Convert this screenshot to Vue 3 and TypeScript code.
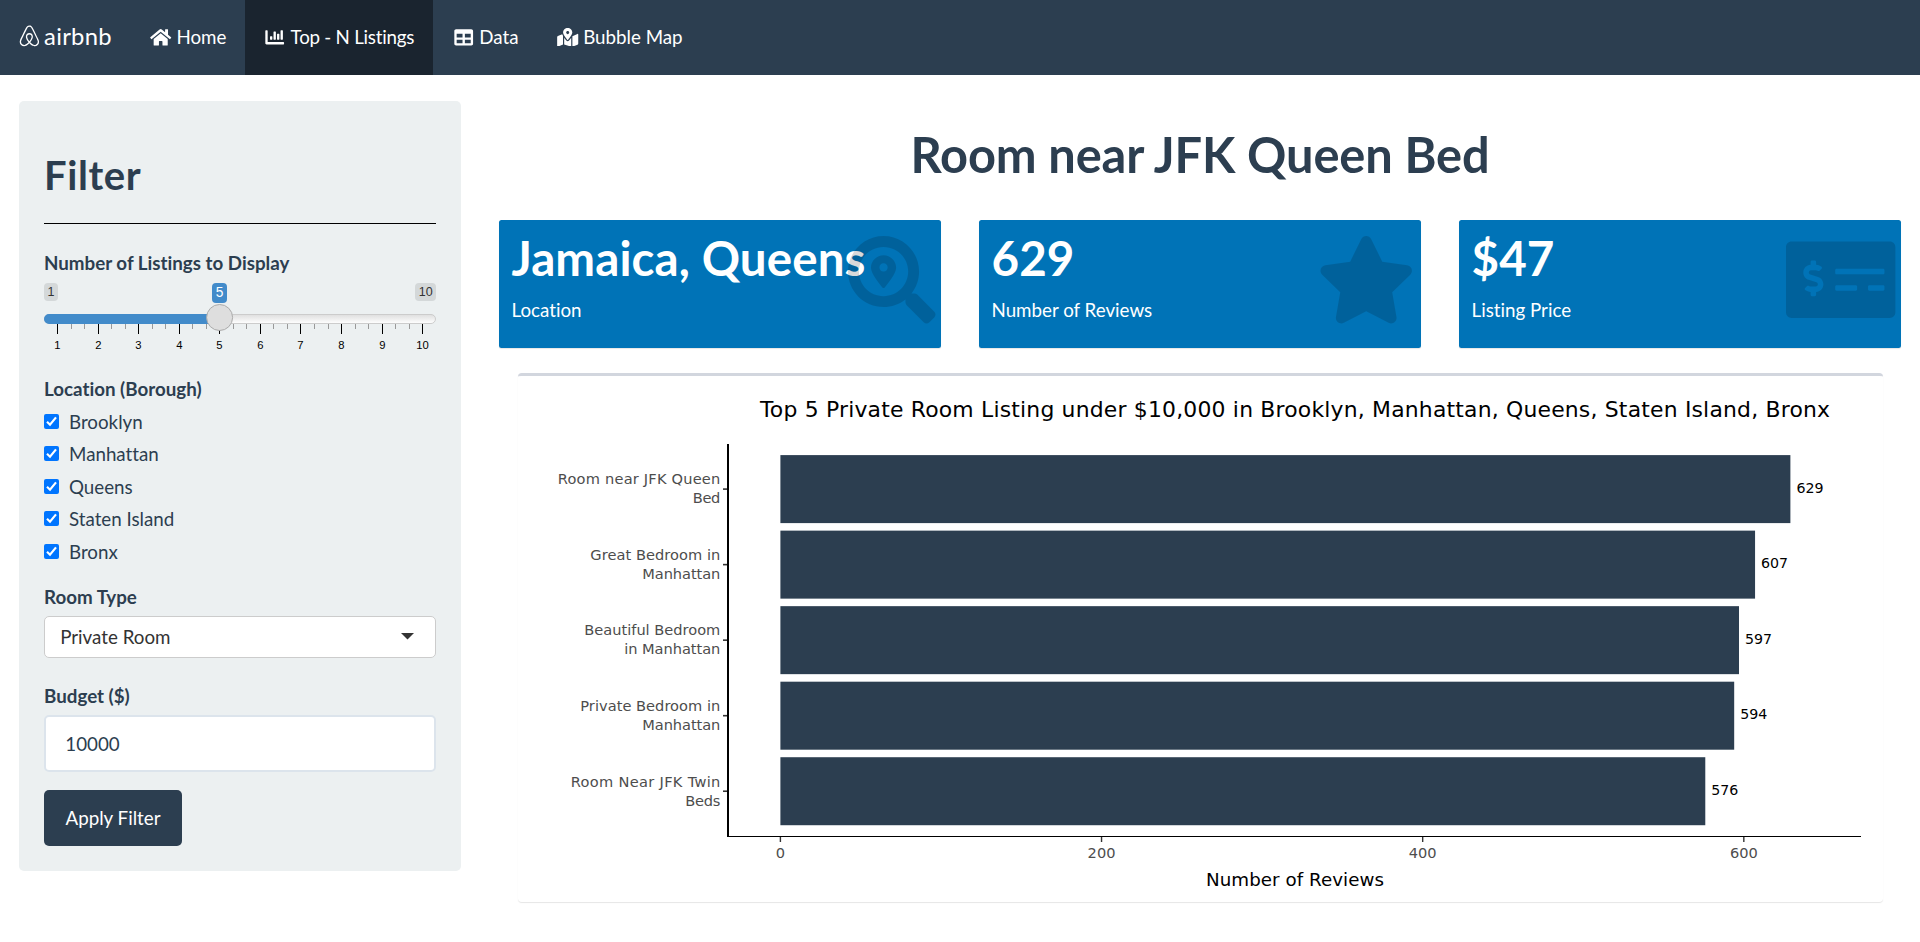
<script setup lang="ts">
interface NavItem {
  label: string
  width: number
  path: string
  active?: boolean
}

interface Listing {
  lines: { text: string; width: number }[]
  reviews: number
}

interface Stat {
  value: string
  label: string
  width: number
  path: string
}

const airbnbPath =
  'M224 373.12c-25.24-31.67-40.08-59.43-45-83.18-22.55-88 112.61-88 90.06 0-5.45 24.25-20.29 52-45 83.18zm138.15 73.23c-42.06 18.31-83.67-10.88-119.3-50.47 103.9-130.07 46.11-200-18.85-200-54.92 0-85.16 46.51-73.28 100.5 6.93 29.19 25.23 62.39 54.43 99.5-32.53 36.05-60.55 52.69-85.15 54.92-50 7.43-89.11-41.06-71.3-91.09 15.1-39.16 111.72-231.18 115.87-241.56 15.75-30.07 25.56-57.4 59.38-57.4 32.34 0 43.4 25.94 60.37 59.87 36 70.62 89.35 177.48 114.84 239.09 13.17 33.07-1.37 71.29-37.01 86.64zm47-136.12C280.27 35.93 273.13 32 224 32c-45.52 0-64.87 31.67-84.66 72.79C33.18 317.1 22.89 347.19 22 349.81-3.22 419.14 48.74 480 111.63 480c21.71 0 60.61-6.06 112.37-62.4 58.68 63.78 101.26 62.4 112.37 62.4 62.89.05 114.85-60.86 89.61-130.19.02-3.89-16.82-38.9-16.82-39.58z'

const navItems: NavItem[] = [
  {
    label: 'Home',
    width: 576,
    path: 'M280.37 148.26L96 300.11V464a16 16 0 0 0 16 16l112.06-.29a16 16 0 0 0 15.92-16V368a16 16 0 0 1 16-16h64a16 16 0 0 1 16 16v95.64a16 16 0 0 0 16 16.05L464 480a16 16 0 0 0 16-16V300L295.67 148.26a12.19 12.19 0 0 0-15.3 0zM571.6 251.47L488 182.56V44.05a12 12 0 0 0-12-12h-56a12 12 0 0 0-12 12v72.61L318.47 43a48 48 0 0 0-61 0L4.34 251.47a12 12 0 0 0-1.6 16.9l25.5 31A12 12 0 0 0 45.15 301l235.22-193.74a12.19 12.19 0 0 1 15.3 0L530.9 301a12 12 0 0 0 16.9-1.6l25.5-31a12 12 0 0 0-1.7-16.93z',
  },
  {
    label: 'Top - N Listings',
    width: 512,
    active: true,
    path: 'M332.8 320h38.4c6.4 0 12.8-6.4 12.8-12.8V172.8c0-6.4-6.4-12.8-12.8-12.8h-38.4c-6.4 0-12.8 6.4-12.8 12.8v134.4c0 6.4 6.4 12.8 12.8 12.8zm96 0h38.4c6.4 0 12.8-6.4 12.8-12.8V76.8c0-6.4-6.4-12.8-12.8-12.8h-38.4c-6.4 0-12.8 6.4-12.8 12.8v230.4c0 6.4 6.4 12.8 12.8 12.8zm-288 0h38.4c6.4 0 12.8-6.4 12.8-12.8v-70.4c0-6.4-6.4-12.8-12.8-12.8h-38.4c-6.4 0-12.8 6.4-12.8 12.8v70.4c0 6.4 6.4 12.8 12.8 12.8zm96 0h38.4c6.4 0 12.8-6.4 12.8-12.8V108.8c0-6.4-6.4-12.8-12.8-12.8h-38.4c-6.4 0-12.8 6.4-12.8 12.8v198.4c0 6.4 6.4 12.8 12.8 12.8zM496 384H64V80c0-8.84-7.16-16-16-16H16C7.16 64 0 71.16 0 80v336c0 17.67 14.33 32 32 32h464c8.84 0 16-7.16 16-16v-32c0-8.84-7.16-16-16-16z',
  },
  {
    label: 'Data',
    width: 512,
    path: 'M464 32H48C21.49 32 0 53.49 0 80v352c0 26.51 21.49 48 48 48h416c26.51 0 48-21.49 48-48V80c0-26.51-21.49-48-48-48zM224 416H64v-96h160v96zm0-160H64v-96h160v96zm224 160H288v-96h160v96zm0-160H288v-96h160v96z',
  },
  {
    label: 'Bubble Map',
    width: 576,
    path: 'M288 0c-69.59 0-126 56.41-126 126 0 56.26 82.35 158.8 113.9 196.02 6.39 7.54 17.82 7.54 24.2 0C331.65 284.8 414 182.26 414 126 414 56.41 357.59 0 288 0zm0 168c-23.2 0-42-18.8-42-42s18.8-42 42-42 42 18.8 42 42-18.8 42-42 42zM20.12 215.95A32.006 32.006 0 0 0 0 245.66v250.32c0 11.32 11.43 19.06 21.94 14.86L160 448V214.92c-8.84-15.98-16.07-31.54-21.25-46.42L20.12 215.95zM288 359.67c-14.07 0-27.38-6.18-36.51-16.96-19.66-23.2-40.57-49.62-59.49-76.72v182l192 64V266c-18.92 27.09-39.82 53.52-59.49 76.72-9.13 10.77-22.44 16.95-36.51 16.95zm266.06-198.51L416 224v288l139.88-55.95A31.996 31.996 0 0 0 576 426.34V176.02c0-11.32-11.43-19.06-21.94-14.86z',
  },
]

const stats: Stat[] = [
  {
    value: 'Jamaica, Queens',
    label: 'Location',
    width: 512,
    path: 'M505.04 442.66l-99.71-99.69c-4.5-4.5-10.6-7-17-7h-16.3c27.6-35.3 44-79.69 44-127.99C416.03 93.09 322.92 0 208.02 0S0 93.09 0 207.98s93.11 207.98 208.02 207.98c48.3 0 92.71-16.4 128.01-44v16.3c0 6.4 2.5 12.5 7 17l99.71 99.69c9.4 9.4 24.6 9.4 33.9 0l28.3-28.3c9.4-9.4 9.4-24.59.1-33.99zm-297.02-90.7c-79.54 0-144-64.34-144-143.98 0-79.53 64.35-143.98 144-143.98 79.54 0 144 64.34 144 143.98 0 79.53-64.35 143.98-144 143.98zm.02-239.96c-40.78 0-73.84 33.05-73.84 73.83 0 32.96 48.26 93.05 66.75 114.86a9.24 9.24 0 0 0 14.18 0c18.49-21.81 66.75-81.89 66.75-114.86 0-40.78-33.06-73.83-73.84-73.83zm0 96c-13.26 0-24-10.75-24-24 0-13.26 10.75-24 24-24s24 10.75 24 24c0 13.25-10.75 24-24 24z',
  },
  {
    value: '629',
    label: 'Number of Reviews',
    width: 576,
    path: 'M259.3 17.8L194 150.2 47.9 171.5c-26.2 3.8-36.7 36.1-17.7 54.6l105.7 103-25 145.5c-4.5 26.3 23.2 46 46.4 33.7L288 439.6l130.7 68.7c23.2 12.2 50.9-7.4 46.4-33.7l-25-145.5 105.7-103c19-18.5 8.5-50.8-17.7-54.6L382 150.2 316.7 17.8c-11.7-23.6-45.6-23.9-57.4 0z',
  },
  {
    value: '$47',
    label: 'Listing Price',
    width: 640,
    path: 'M608 32H32C14.33 32 0 46.33 0 64v384c0 17.67 14.33 32 32 32h576c17.67 0 32-14.33 32-32V64c0-17.67-14.33-32-32-32zM176 327.88V344c0 4.42-3.58 8-8 8h-16c-4.42 0-8-3.58-8-8v-16.29c-11.29-.58-22.27-4.52-31.37-11.35-3.9-2.93-4.1-8.77-.57-12.14l11.75-11.21c2.77-2.64 6.89-2.76 10.13-.73 3.87 2.42 8.26 3.72 12.82 3.72h28.11c6.5 0 11.8-5.92 11.8-13.19 0-5.95-3.61-11.19-8.77-12.73l-45-13.5c-18.59-5.58-31.58-23.42-31.58-43.39 0-24.52 19.05-44.44 42.67-45.07V152c0-4.42 3.58-8 8-8h16c4.42 0 8 3.58 8 8v16.29c11.29.58 22.27 4.51 31.37 11.35 3.9 2.93 4.1 8.77.57 12.14l-11.75 11.21c-2.77 2.64-6.89 2.76-10.13.73-3.87-2.43-8.26-3.72-12.82-3.72h-28.11c-6.5 0-11.8 5.92-11.8 13.19 0 5.95 3.61 11.19 8.77 12.73l45 13.5c18.59 5.58 31.58 23.42 31.58 43.39 0 24.53-19.05 44.44-42.67 45.07zM416 312c0 4.42-3.58 8-8 8H296c-4.42 0-8-3.58-8-8v-16c0-4.42 3.58-8 8-8h112c4.42 0 8 3.58 8 8v16zm160 0c0 4.42-3.58 8-8 8h-80c-4.42 0-8-3.58-8-8v-16c0-4.42 3.58-8 8-8h80c4.42 0 8 3.58 8 8v16zm0-96c0 4.42-3.58 8-8 8H296c-4.42 0-8-3.58-8-8v-16c0-4.42 3.58-8 8-8h272c4.42 0 8 3.58 8 8v16z',
  },
]

const boroughs = ['Brooklyn', 'Manhattan', 'Queens', 'Staten Island', 'Bronx']

// Slider ticks: one major per value, two minors between neighbours
const tickStep = 40.56
const majors = Array.from({ length: 10 }, (_, i) => ({
  n: i + 1,
  x: Math.round(13.1 + i * tickStep),
}))
const minors = Array.from({ length: 9 }, (_, i) => [1, 2].map((k) => Math.round(13.1 + (i + k / 3) * tickStep))).flat()

// Chart geometry, in the coordinates of the plot's own svg
const zero = 262.4
const perReview = 1.6057
const listings: Listing[] = [
  { lines: [{ text: 'Room near JFK Queen', width: 162.5 }, { text: 'Bed', width: 27.5 }], reviews: 629 },
  { lines: [{ text: 'Great Bedroom in', width: 130 }, { text: 'Manhattan', width: 78 }], reviews: 607 },
  { lines: [{ text: 'Beautiful Bedroom', width: 136 }, { text: 'in Manhattan', width: 96 }], reviews: 597 },
  { lines: [{ text: 'Private Bedroom in', width: 140 }, { text: 'Manhattan', width: 78 }], reviews: 594 },
  { lines: [{ text: 'Room Near JFK Twin', width: 149.5 }, { text: 'Beds', width: 35 }], reviews: 576 },
]
const bars = listings.map((l, i) => {
  const top = 79.1 + i * 75.53
  return { ...l, top, width: l.reviews * perReview, mid: top + 34 }
})
const axisTicks = [0, 200, 400, 600].map((v) => ({ v, x: zero + v * perReview }))
</script>

<template>
  <div class="page">
    <nav class="navbar">
      <div class="brand">
        <svg class="brand-icon" viewBox="0 0 448 512"><path :d="airbnbPath" /></svg>
        <span>airbnb</span>
      </div>
      <div v-for="item in navItems" :key="item.label" class="nav-item" :class="{ active: item.active }">
        <svg class="nav-icon" :viewBox="`0 0 ${item.width} 512`"><path :d="item.path" /></svg>
        <span>{{ item.label }}</span>
      </div>
    </nav>

    <div class="content">
      <aside class="sidebar">
        <h2>Filter</h2>
        <hr />
        <div class="label">Number of Listings to Display</div>
        <svg class="slider" width="392" height="70" viewBox="0 0 392 70">
          <defs>
            <linearGradient id="track" x1="0" y1="0" x2="0" y2="1">
              <stop offset="0" stop-color="#dedede" />
              <stop offset="1" stop-color="#ffffff" />
            </linearGradient>
          </defs>
          <rect width="14" height="18" rx="4" fill="#d4d8d9" />
          <text x="7" y="13" class="range">1</text>
          <rect x="371" width="21" height="18" rx="4" fill="#d4d8d9" />
          <text x="381.7" y="13" class="range">10</text>
          <rect x="168" width="15" height="20" rx="4" fill="#428bca" />
          <text x="175.6" y="14" class="range current">5</text>
          <rect x=".5" y="31.5" width="391" height="9" rx="4.5" fill="url(#track)" stroke="#cccccc" />
          <path d="M5 31H176V41H5A5 5 0 0 1 5 31Z" fill="#428bca" />
          <rect v-for="x in minors" :key="`m${x}`" :x="x" y="41" width="1" height="5" fill="#999999" />
          <g v-for="m in majors" :key="m.n">
            <rect :x="m.x" y="41" width="1" height="10" fill="#000000" />
            <text :x="m.x + 0.5" y="66" class="tick">{{ m.n }}</text>
          </g>
          <circle cx="175.6" cy="34.5" r="13" fill="#dedede" stroke="#ababab" />
        </svg>

        <div class="label label-location">Location (Borough)</div>
        <div class="checks">
          <div v-for="b in boroughs" :key="b" class="check">
            <svg class="box" width="15" height="15" viewBox="0 0 15 15">
              <rect width="15" height="15" rx="2" fill="#0075ff" />
              <path d="M3 7.8L6 10.7L12 3.4" fill="none" stroke="#ffffff" stroke-width="2.2" />
            </svg>
            <span>{{ b }}</span>
          </div>
        </div>

        <div class="label label-room">Room Type</div>
        <div class="select">
          <span>Private Room</span>
          <svg width="13" height="7" viewBox="0 0 13 7"><path d="M0 0H13L6.5 6.5Z" fill="#333333" /></svg>
        </div>

        <div class="label label-budget">Budget ($)</div>
        <div class="input">10000</div>
        <button type="button" class="apply">Apply Filter</button>
      </aside>

      <main class="main">
        <h1>Room near JFK Queen Bed</h1>
        <div class="stats">
          <section v-for="s in stats" :key="s.label" class="stat">
            <div class="value">{{ s.value }}</div>
            <div class="caption">{{ s.label }}</div>
            <svg class="stat-icon" :viewBox="`0 0 ${s.width} 512`"><path :d="s.path" /></svg>
          </section>
        </div>

        <section class="chart">
          <svg width="1365" height="526" viewBox="0 0 1365 526">
            <text x="242" y="40.5" class="title" textLength="1070">Top 5 Private Room Listing under $10,000 in Brooklyn, Manhattan, Queens, Staten Island, Bronx</text>
            <g v-for="(bar, i) in bars" :key="i">
              <rect :x="zero" :y="bar.top" :width="bar.width" height="68" fill="#2c3e50" />
              <text :x="zero + bar.width + 6" :y="Math.floor(bar.mid + 4)" class="count">{{ bar.reviews }}</text>
              <text
                v-for="(line, k) in bar.lines"
                :key="k"
                :x="202.3 - line.width"
                :y="Math.round(bar.mid - 4.7) + k * 19"
                :textLength="line.width"
                class="name"
              >{{ line.text }}</text>
              <rect x="205" :y="bar.mid - 0.8" width="4" height="1.6" fill="#333333" />
            </g>
            <rect x="209" y="68" width="2" height="393" fill="#000000" />
            <rect x="209" y="460" width="1134" height="1" fill="#000000" />
            <g v-for="t in axisTicks" :key="t.v">
              <rect :x="t.x - 0.7" y="461" width="1.4" height="5" fill="#333333" />
              <text :x="t.x" y="482" class="axis">{{ t.v }}</text>
            </g>
            <text x="688" y="510" class="axis-title" textLength="178">Number of Reviews</text>
          </svg>
        </section>
      </main>
    </div>
  </div>
</template>

<style>
body {
  background: #ffffff;
}
</style>

<style scoped>
.page {
  width: 1920px;
  height: 942px;
  overflow: hidden;
  font-family: Lato, 'Open Sans', sans-serif;
  font-size: 18.75px;
  font-variant-ligatures: none;
  line-height: 26.8px;
  color: #2c3e50;
}
.navbar {
  display: flex;
  height: 75px;
  background: #2c3e50;
  color: #ffffff;
}
.brand {
  display: flex;
  align-items: center;
  box-sizing: border-box;
  width: 130.5px;
  padding-left: 18.75px;
  padding-bottom: 3px;
  font-size: 23.75px;
  letter-spacing: 0.3px;
  gap: 4.5px;
}
.brand-icon {
  width: 20.8px;
  height: 23.75px;
  fill: #ffffff;
}
.nav-item {
  display: flex;
  align-items: center;
  padding: 0 18.75px 1px;
  gap: 3.8px;
}
.nav-icon {
  width: 23.4px;
  height: 18.75px;
  fill: #ffffff;
}
.nav-item.active {
  padding: 0 19.25px 1px 18.25px;
  background: #1a242f;
  letter-spacing: -0.25px;
}
.content {
  display: flex;
  align-items: flex-start;
  padding: 26px 19px 0;
  gap: 38px;
}
.sidebar {
  box-sizing: border-box;
  width: 442px;
  height: 770px;
  padding: 51.5px 25px 0;
  border-radius: 5px;
  background: #ecf0f1;
}
h2 {
  margin: 0;
  font-size: 40px;
  line-height: 44px;
  font-weight: 700;
  letter-spacing: 0.6px;
}
hr {
  height: 1px;
  margin: 26.5px 0 26.4px;
  border: 0;
  background: #000000;
}
.label {
  height: 26.8px;
  font-weight: 700;
}
.slider {
  display: block;
  margin-top: 5.8px;
}
.range {
  font: 12.5px 'Liberation Sans', sans-serif;
  text-anchor: middle;
  fill: #333333;
}
.range.current {
  font-size: 13.75px;
  fill: #ffffff;
}
.tick {
  font: 11.25px 'Liberation Sans', sans-serif;
  text-anchor: middle;
  fill: #000000;
}
.label-location {
  margin-top: 23.4px;
}
.checks {
  margin-top: 5.8px;
}
.check {
  display: flex;
  height: 32.5px;
  gap: 10px;
}
.box {
  margin-top: 5px;
}
.label-room {
  margin-top: 12.4px;
}
.select {
  display: flex;
  align-items: center;
  justify-content: space-between;
  box-sizing: border-box;
  height: 42px;
  margin-top: 5px;
  padding: 2px 21px 0 15.2px;
  border: 1px solid #cccccc;
  border-radius: 5px;
  background: #ffffff;
  color: #333333;
}
.select svg {
  margin-bottom: 3px;
}
.label-budget {
  margin-top: 25.7px;
}
.input {
  box-sizing: border-box;
  height: 57px;
  margin-top: 4.8px;
  padding: 14px 19.3px 0;
  border: 2px solid #dce4ec;
  border-radius: 5px;
  background: #ffffff;
}
.apply {
  display: block;
  width: 138px;
  height: 56px;
  margin-top: 18px;
  padding: 0;
  border: 0;
  border-radius: 5px;
  background: #2c3e50;
  color: #ffffff;
  font: 18.75px/26.8px Lato, 'Open Sans', sans-serif;
}
.main {
  width: 1403px;
}
h1 {
  margin: 26px 0 39px;
  font-size: 48.75px;
  line-height: 54px;
  font-weight: 700;
  letter-spacing: -0.1px;
  text-align: center;
}
.stats {
  display: flex;
  gap: 38px;
}
.stat {
  position: relative;
  box-sizing: border-box;
  width: 442px;
  height: 128px;
  padding: 13px 12.5px 0;
  border-radius: 2.5px;
  background: #0073b7;
  box-shadow: 0 1px 1px rgba(0, 0, 0, 0.1);
  color: #ffffff;
}
.value {
  height: 50px;
  font-size: 47.5px;
  line-height: 50px;
  font-weight: 700;
  letter-spacing: 0.1px;
}
.caption {
  margin-top: 13.5px;
}
.stat-icon {
  position: absolute;
  top: 16px;
  right: 5.5px;
  height: 87.5px;
  fill: rgba(0, 0, 0, 0.15);
}
.chart {
  width: 1365px;
  height: 526px;
  margin: 25px 0 0 19px;
  border-top: 3px solid #d2d6de;
  border-radius: 3.75px;
  box-shadow: 0 1px 1px rgba(0, 0, 0, 0.1);
}
.chart svg {
  display: block;
}
.chart text {
  font-family: 'DejaVu Sans', sans-serif;
}
.title {
  font-size: 21.9px;
  fill: #000000;
}
.name {
  font-size: 14.6px;
  fill: #4d4d4d;
}
.count {
  font-size: 14.2px;
  fill: #000000;
}
.axis {
  font-size: 14.6px;
  text-anchor: middle;
  fill: #4d4d4d;
}
.axis-title {
  font-size: 18.26px;
  fill: #000000;
}
</style>
